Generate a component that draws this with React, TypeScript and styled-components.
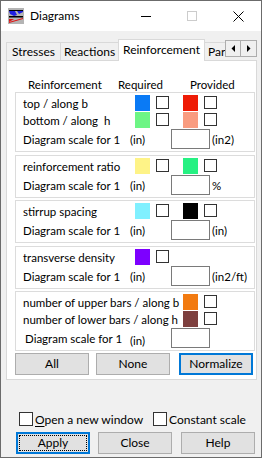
import React from "react";
import styled, { createGlobalStyle } from "styled-components";

const Global = createGlobalStyle`
  html, body { margin: 0; padding: 0; background: #ffffff; }
  body { font-family: Lato, "Segoe UI", sans-serif; font-size: 11.5px; color: #000; }
  * { box-sizing: border-box; }
`;

const Window = styled.div`
  width: 262px;
  height: 458px;
  border: 1px solid #6b6b6b;
  background: #f0f0f0;
  display: flex;
  flex-direction: column;
  overflow: hidden;
`;

const TitleBar = styled.div`
  height: 30px;
  flex: none;
  background: #ffffff;
  display: flex;
  align-items: center;
`;

const AppIcon = styled.svg`
  margin-left: 7px;
  flex: none;
`;

const Title = styled.div`
  margin-left: 6px;
  font-size: 12px;
  flex: 1;
  padding-bottom: 1px;
`;

const CaptionButton = styled.div`
  width: 46px;
  height: 30px;
  display: flex;
  align-items: center;
  justify-content: center;
  flex: none;
`;

const Body = styled.div`
  flex: 1;
  display: flex;
  flex-direction: column;
  padding: 8px 0 3px 5px;
`;

const TabRow = styled.div`
  display: flex;
  height: 22px;
  position: relative;
  z-index: 2;
`;

const TabsWrap = styled.div`
  width: 219px;
  height: 22px;
  overflow: hidden;
  display: flex;
  align-items: flex-end;
`;

const Tab = styled.div<{ $active?: boolean; $w: number }>`
  flex: none;
  width: ${(p) => p.$w}px;
  height: ${(p) => (p.$active ? 22 : 18)}px;
  margin-bottom: ${(p) => (p.$active ? 0 : 1)}px;
  margin-left: -1px;
  &:first-child { margin-left: 0; }
  border: 1px solid #d9d9d9;
  border-bottom: none;
  background: ${(p) => (p.$active ? "#ffffff" : "#f0f0f0")};
  display: flex;
  align-items: center;
  justify-content: ${(p) => (p.$w < 40 ? "flex-start" : "center")};
  padding-left: ${(p) => (p.$w < 40 ? 3 : 0)}px;
  padding-bottom: ${(p) => (p.$active ? 3 : 0)}px;
  position: relative;
  z-index: ${(p) => (p.$active ? 2 : 1)};
  white-space: nowrap;
  overflow: hidden;
  font-size: 12px;
`;

const Spinner = styled.div`
  display: flex;
  margin-top: 1px;
  height: 17px;
`;

const SpinBtn = styled.div`
  width: 16px;
  height: 17px;
  border: 1px solid #adadad;
  background: #f0f0f0;
  display: flex;
  align-items: center;
  justify-content: center;
  & + & { border-left: none; width: 16px; }
`;

const Panel = styled.div`
  width: 251px;
  height: 320px;
  margin-top: -1px;
  border: 1px solid #d9d9d9;
  background: #ffffff;
  display: flex;
  flex-direction: column;
  flex: none;
`;

const HeaderRow = styled.div`
  height: 31px;
  display: flex;
  align-items: flex-end;
  padding-left: 21px;
  padding-bottom: 0px;
  line-height: 15px;
`;

const HeaderCell = styled.div<{ $w?: number }>`
  width: ${(p) => (p.$w ? `${p.$w}px` : "auto")};
  flex: none;
`;

const Group = styled.div<{ $top: number }>`
  margin: ${(p) => p.$top}px 1px 0 8px;
  border: 1px solid #dcdcdc;
  padding: 2px 0 1px 7px;
  display: flex;
  flex-direction: column;
`;

const Row = styled.div`
  height: 17px;
  display: flex;
  align-items: flex-start;
`;

const Label = styled.div<{ $w: number }>`
  width: ${(p) => p.$w}px;
  flex: none;
  height: 16px;
  line-height: 17px;
  white-space: pre;
`;

const Swatch = styled.div<{ $c: string; $gap?: number }>`
  width: 15px;
  height: 16px;
  flex: none;
  background: ${(p) => p.$c};
  margin-left: ${(p) => p.$gap || 0}px;
`;

const Check = styled.div<{ $gap?: number }>`
  width: 13px;
  height: 13px;
  margin-top: 1px;
  flex: none;
  border: 1px solid #333333;
  background: #ffffff;
  margin-left: ${(p) => p.$gap || 0}px;
`;

const ScaleRow = styled.div<{ $indent?: boolean }>`
  height: 21px;
  display: flex;
  align-items: flex-start;
  padding-left: ${(p) => (p.$indent ? 2 : 0)}px;
`;

const ScaleText = styled.div<{ $w: number; $drop?: number }>`
  width: ${(p) => p.$w}px;
  flex: none;
  line-height: 20px;
  padding-top: ${(p) => p.$drop || 1}px;
  white-space: nowrap;
`;

const InputBox = styled.div`
  width: 39px;
  height: 20px;
  border: 1px solid #7a7a7a;
  background: #fff;
  flex: none;
`;

const Unit = styled.div`
  margin-left: 2px;
  line-height: 20px;
  padding-top: 1px;
  white-space: nowrap;
`;

const ButtonRow = styled.div`
  display: flex;
  margin-top: 2px;
  padding-left: 8px;
`;

const Button = styled.div<{ $focus?: boolean; $gap?: number; $dotted?: boolean }>`
  width: 74px;
  height: 22px;
  flex: none;
  margin-left: ${(p) => p.$gap || 0}px;
  background: #e1e1e1;
  border: ${(p) => (p.$focus ? "2px solid #0078d7" : "1px solid #adadad")};
  display: flex;
  align-items: center;
  justify-content: center;
  position: relative;
  padding-bottom: 1px;
  font-size: 12px;
  ${(p) =>
    p.$dotted
      ? `&::after { content: ""; position: absolute; inset: 1px; border: 1px dotted #000; }`
      : ""}
`;

const Spacer = styled.div`
  flex: 1;
`;

const OptionRow = styled.div`
  display: flex;
  align-items: center;
  height: 14px;
  padding-left: 13px;
  font-size: 12px;
`;

const Option = styled.label<{ $w?: number }>`
  display: flex;
  align-items: center;
  width: ${(p) => (p.$w ? `${p.$w}px` : "auto")};
  flex: none;
  white-space: nowrap;
`;

const OptBox = styled.span`
  width: 14px;
  height: 14px;
  border: 1px solid #333;
  background: #fff;
  margin-right: 2px;
  flex: none;
`;

const U = styled.span`
  text-decoration: underline;
  text-underline-offset: 2px;
`;

const FooterRow = styled.div`
  display: flex;
  margin-top: 6px;
  padding-left: 10px;
`;

type RowData = { label: string; a?: string; b?: string };
type GroupData = { rows: RowData[]; unit: string; top: number; last?: boolean };

const groups: GroupData[] = [
  {
    rows: [
      { label: "top / along b", a: "#0a7af5", b: "#ee1b05" },
      { label: "bottom / along  h", a: "#6df585", b: "#f99c80" },
    ],
    unit: "(in2)",
    top: 0,
  },
  { rows: [{ label: "reinforcement ratio", a: "#fef387", b: "#26f182" }], unit: "%", top: 3 },
  { rows: [{ label: "stirrup spacing", a: "#80f0ff", b: "#000000" }], unit: "(in)", top: 2 },
  { rows: [{ label: "transverse density", a: "#7d00ff" }], unit: "(in2/ft)", top: 3 },
  {
    rows: [
      { label: "number of upper bars / along b", b: "#f27a10" },
      { label: "number of lower bars / along h", b: "#7d3f3e" },
    ],
    unit: "",
    top: 2,
    last: true,
  },
];

const Icon = () => (
  <AppIcon width="16" height="16" viewBox="0 0 16 16">
    <rect x="0" y="0" width="16" height="16" fill="#b4b4b4" />
    <rect x="1" y="2" width="14" height="1" fill="#000" />
    <polygon points="1,3 7,3 9,7 6,8 2,6" fill="#2020e0" />
    <polygon points="9,3 15,3 15,4 11,6" fill="#2020e0" />
    <rect x="1" y="8" width="14" height="1.5" fill="#000" />
    <polygon points="1,14 15,10 15,11 1,15" fill="#e01010" />
    <polygon points="1,11 6,11 1,14" fill="#e01010" />
  </AppIcon>
);

export default function App() {
  return (
    <>
      <Global />
      <Window>
        <TitleBar>
          <Icon />
          <Title>Diagrams</Title>
          <CaptionButton>
            <svg width="10" height="10" viewBox="0 0 10 10">
              <rect x="0" y="5" width="10" height="1" fill="#000" />
            </svg>
          </CaptionButton>
          <CaptionButton>
            <svg width="10" height="10" viewBox="0 0 10 10">
              <rect x="0.5" y="0.5" width="9" height="9" fill="none" stroke="#cccccc" />
            </svg>
          </CaptionButton>
          <CaptionButton>
            <svg width="11" height="11" viewBox="0 0 11 11">
              <path d="M0.5 0.5 L10.5 10.5 M10.5 0.5 L0.5 10.5" stroke="#000" strokeWidth="1" />
            </svg>
          </CaptionButton>
        </TitleBar>
        <Body>
          <TabRow>
            <TabsWrap>
              <Tab $w={55}>Stresses</Tab>
              <Tab $w={59}>Reactions</Tab>
              <Tab $w={87} $active>
                Reinforcement
              </Tab>
              <Tab $w={30}>Par</Tab>
            </TabsWrap>
            <Spinner>
              <SpinBtn>
                <svg width="4" height="7" viewBox="0 0 4 7">
                  <polygon points="4,0 4,7 0.5,3.5" fill="#000" />
                </svg>
              </SpinBtn>
              <SpinBtn>
                <svg width="4" height="7" viewBox="0 0 4 7">
                  <polygon points="0,0 0,7 3.5,3.5" fill="#000" />
                </svg>
              </SpinBtn>
            </Spinner>
          </TabRow>
          <Panel>
            <HeaderRow>
              <HeaderCell $w={90}>Reinforcement</HeaderCell>
              <HeaderCell $w={72}>Required</HeaderCell>
              <HeaderCell>Provided</HeaderCell>
            </HeaderRow>
            {groups.map((g, gi) => (
              <Group key={gi} $top={g.top}>
                {g.rows.map((r, ri) => (
                  <Row key={ri}>
                    <Label $w={r.a ? 112 : 146}>{r.label}</Label>
                    {r.a && (
                      <>
                        <Swatch $c={r.a} />
                        <Check $gap={6} />
                      </>
                    )}
                    {r.b && (
                      <>
                        <Swatch $c={r.b} $gap={14} />
                        <Check $gap={6} />
                      </>
                    )}
                  </Row>
                ))}
                <ScaleRow $indent={g.last}>
                  <ScaleText $w={g.last ? 105 : 107}>Diagram scale for 1</ScaleText>
                  <ScaleText $w={41} $drop={g.last ? 3 : 1}>
                    (in)
                  </ScaleText>
                  <InputBox />
                  {g.unit && <Unit>{g.unit}</Unit>}
                </ScaleRow>
              </Group>
            ))}
            <ButtonRow>
              <Button>All</Button>
              <Button $gap={7}>None</Button>
              <Button $gap={9} $focus>
                Normalize
              </Button>
            </ButtonRow>
          </Panel>
          <Spacer />
          <OptionRow>
            <Option $w={134}>
              <OptBox />
              <span>
                <U>O</U>pen a new window
              </span>
            </Option>
            <Option>
              <OptBox />
              <span>Constant scale</span>
            </Option>
          </OptionRow>
          <FooterRow>
            <Button $focus $dotted>
              Apply
            </Button>
            <Button $gap={8}>Close</Button>
            <Button $gap={9}>Help</Button>
          </FooterRow>
        </Body>
      </Window>
    </>
  );
}
